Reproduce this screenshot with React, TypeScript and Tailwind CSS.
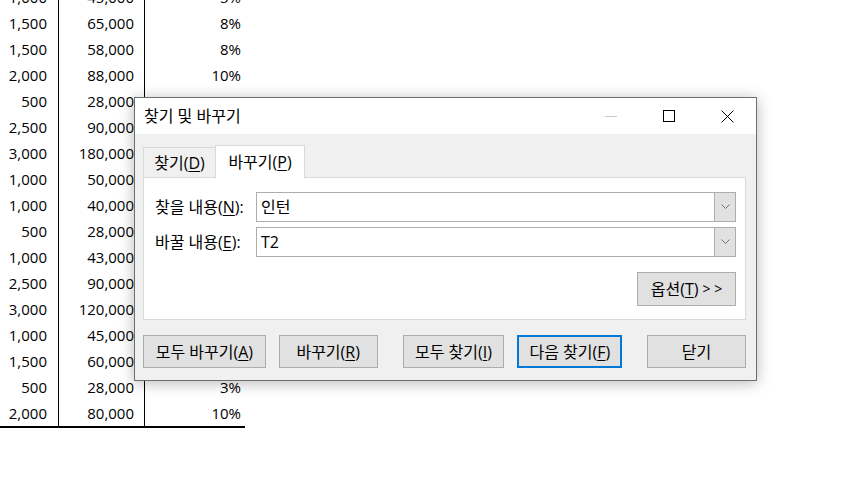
const rows: Array<[string, string, string]> = [
    ['1,000', '45,000', '5%'],
    ['1,500', '65,000', '8%'],
    ['1,500', '58,000', '8%'],
    ['2,000', '88,000', '10%'],
    ['500', '28,000', '3%'],
    ['2,500', '90,000', '10%'],
    ['3,000', '180,000', '10%'],
    ['1,000', '50,000', '5%'],
    ['1,000', '40,000', '5%'],
    ['500', '28,000', '3%'],
    ['1,000', '43,000', '5%'],
    ['2,500', '90,000', '10%'],
    ['3,000', '120,000', '10%'],
    ['1,000', '45,000', '5%'],
    ['1,500', '60,000', '8%'],
    ['500', '28,000', '3%'],
    ['2,000', '80,000', '10%'],
];

const font = "font-[family-name:'Open_Sans','Noto_Sans_CJK_KR',sans-serif]";

function Key({ k }: { k: string }) {
    return (
        <>
            (<u className="underline underline-offset-2">{k}</u>)
        </>
    );
}

function Combo({ value }: { value: string }) {
    return (
        <div className="flex h-[30px] w-[480px] border border-[#adadad] bg-white">
            <div className="flex flex-1 items-center pl-[4px] leading-none">
                {value}
            </div>
            <div className="flex w-[21px] items-center justify-center border-l border-[#adadad] bg-[#e1e1e1]">
                <svg width="9" height="6" viewBox="0 0 9 6" fill="none">
                    <path d="M0.5 0.5 L4.5 4.5 L8.5 0.5" stroke="#707070" strokeWidth="1" />
                </svg>
            </div>
        </div>
    );
}

const btn =
    'flex h-[33px] items-center justify-center border border-[#adadad] bg-[#e1e1e1] leading-none';

export default function App() {
    return (
        <div className={`relative h-[489px] w-[861px] overflow-hidden bg-white text-[15px] text-black ${font}`}>
            {/* sheet */}
            <div className="-mt-[16px] w-[245px]">
                {rows.map((r, i) => (
                    <div key={i} className="flex h-[26px] leading-none">
                        <div className="flex w-[59px] items-center justify-end border-r border-black pr-[11px]">
                            {r[0]}
                        </div>
                        <div className="flex w-[86px] items-center justify-end border-r border-black pr-[10px]">
                            {r[1]}
                        </div>
                        <div className="flex w-[100px] items-center justify-end pr-[4px]">
                            {r[2]}
                        </div>
                    </div>
                ))}
                <div className="h-[2px] w-[245px] bg-black" />
            </div>

            {/* dialog */}
            <div className="absolute left-[134px] top-[97px] flex h-[284px] w-[623px] flex-col border border-[#6e6e6e] bg-[#f0f0f0] text-[16px] shadow-[0_2px_14px_rgba(0,0,0,0.28)]">
                <div className="flex h-[36px] items-center bg-white">
                    <span className="pl-[9px] leading-none">찾기 및 바꾸기</span>
                    <div className="ml-auto flex h-full">
                        <div className="flex w-[58px] items-center justify-center">
                            <div className="h-px w-[12px] bg-[#c7c7c7]" />
                        </div>
                        <div className="flex w-[58px] items-center justify-center">
                            <div className="h-[12px] w-[12px] border border-black" />
                        </div>
                        <div className="flex w-[58px] items-center justify-center">
                            <svg width="13" height="13" viewBox="0 0 13 13">
                                <path d="M0.5 0.5 L12.5 12.5 M12.5 0.5 L0.5 12.5" stroke="#000" strokeWidth="1" />
                            </svg>
                        </div>
                    </div>
                </div>

                <div className="flex flex-1 flex-col pl-[8px] pr-[10px] pt-[11px]">
                    <div className="flex h-[32px] items-end">
                        <div className="-mb-px flex h-[31px] w-[72px] items-center justify-center border border-r-0 border-[#d9d9d9] leading-none">
                            찾기<Key k="D" />
                        </div>
                        <div className="relative z-10 -mb-px flex h-[33px] w-[90px] items-center justify-center border border-b-0 border-[#d9d9d9] bg-white leading-none">
                            바꾸기<Key k="P" />
                        </div>
                    </div>
                    <div className="flex h-[143px] flex-col border border-[#d9d9d9] bg-white pl-[11px] pr-[9px] pt-[14px]">
                        <div className="flex items-center">
                            <span className="w-[101px] leading-none">
                                찾을 내용<Key k="N" />:
                            </span>
                            <Combo value="인턴" />
                        </div>
                        <div className="mt-[5px] flex items-center">
                            <span className="w-[101px] leading-none">
                                바꿀 내용<Key k="E" />:
                            </span>
                            <Combo value="T2" />
                        </div>
                        <div className="mt-[15px] flex justify-end">
                            <div className="flex h-[34px] w-[99px] items-center justify-center border border-[#adadad] bg-[#e1e1e1] leading-none">
                                옵션<Key k="T" />&nbsp;<span className="text-[14px]">&gt; &gt;</span>
                            </div>
                        </div>
                    </div>

                    <div className="mt-[15px] flex">
                        <div className={`${btn} w-[123px]`}>
                            모두 바꾸기<Key k="A" />
                        </div>
                        <div className={`${btn} ml-[13px] w-[99px]`}>
                            바꾸기<Key k="R" />
                        </div>
                        <div className={`${btn} ml-[25px] w-[102px]`}>
                            모두 찾기<Key k="I" />
                        </div>
                        <div className="ml-[13px] flex h-[33px] w-[105px] items-center justify-center border-2 border-[#0078d7] bg-[#e1e1e1] leading-none">
                            다음 찾기<Key k="F" />
                        </div>
                        <div className={`${btn} ml-[25px] w-[99px]`}>닫기</div>
                    </div>
                </div>
            </div>
        </div>
    );
}
